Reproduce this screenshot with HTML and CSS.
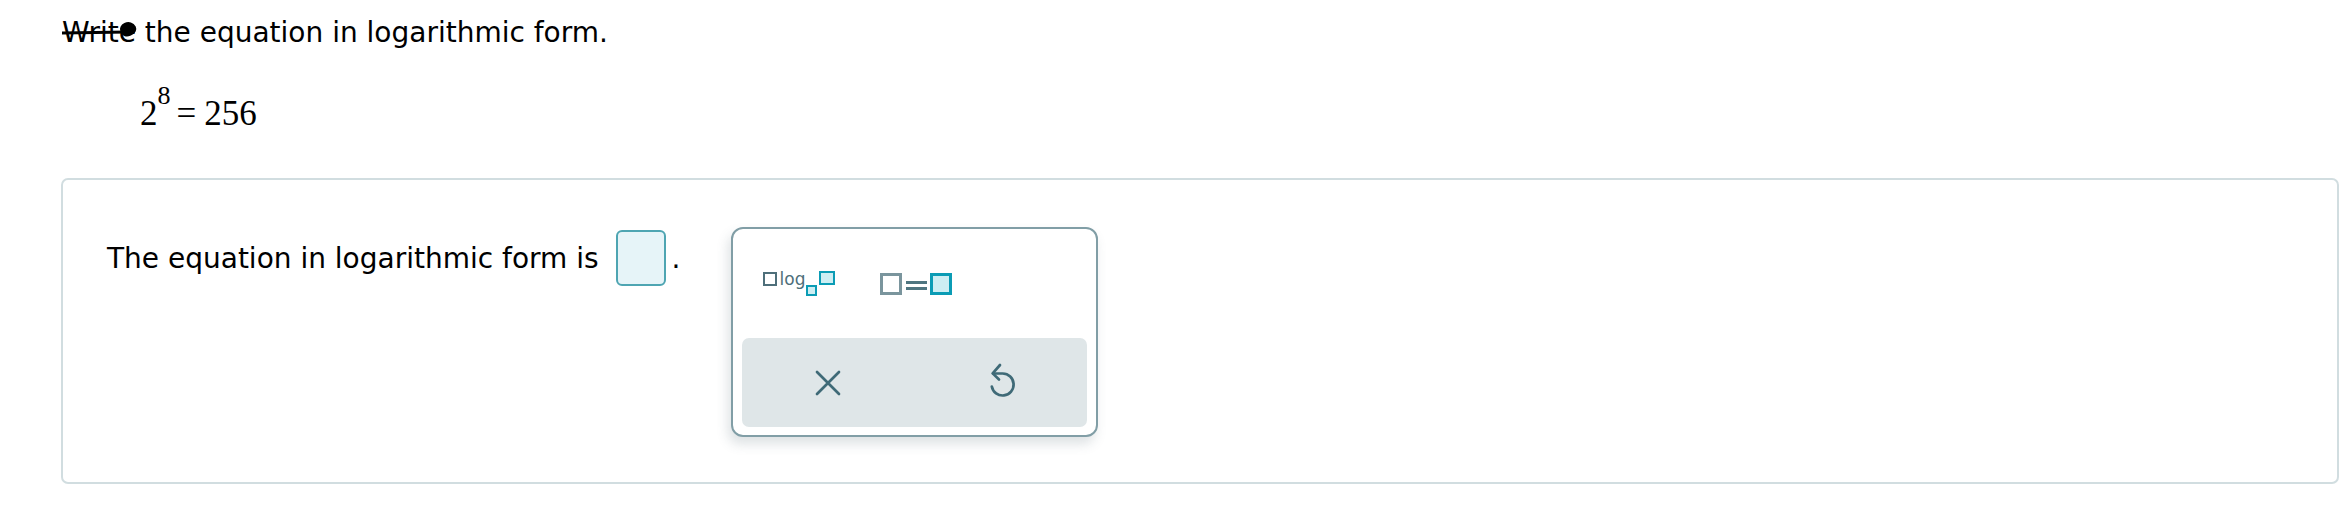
FILE: index.html
```html
<!DOCTYPE html>
<html lang="en">
  <head>
    <meta charset="UTF-8" />
    <title>Logarithmic form</title>
    <link rel="stylesheet" href="styles.css">
  </head>
  <body>
    <div class="page">
      <p class="prompt"><span class="struck">Write</span> the equation in logarithmic form.</p>

      <div class="given">
        <span>2</span><sup class="exp">8</sup><span class="op">=</span><span>256</span>
      </div>

      <div class="panel">
        <div class="answer">
          <span>The equation in logarithmic form is</span>
          <span class="slot"></span>
          <span class="dot">.</span>
        </div>

        <div class="keypad">
          <div class="keys">
            <button class="key" title="logarithm">
              <span class="tpl-log">
                <span class="bx bx-arg"></span>
                <span class="log-word">log</span>
                <span class="bx bx-sub"></span>
                <span class="bx bx-sup"></span>
              </span>
            </button>
            <button class="key" title="equals">
              <span class="tpl-eq">
                <span class="sq sq-left"></span>
                <span class="eq-bars"><i></i><i></i></span>
                <span class="sq sq-right"></span>
              </span>
            </button>
            <span></span>
          </div>

          <div class="actions">
            <button class="act" title="clear">
              <svg width="28" height="28" viewBox="0 0 28 28">
                <path d="M3 3 L25 25 M25 3 L3 25" stroke="#3f6a77" stroke-width="2.7" stroke-linecap="round" fill="none" />
              </svg>
            </button>
            <button class="act" title="undo">
              <svg width="45" height="45" viewBox="0 0 45 45">
                <path d="M15 13.5 H24.7 A11 11 0 1 1 13.8 26.5" stroke="#3f6a77" stroke-width="2.7" stroke-linecap="round" fill="none" />
                <path d="M22 5 L14.7 13.4 L21 19.5" stroke="#3f6a77" stroke-width="2.7" stroke-linecap="round" stroke-linejoin="round" fill="none" />
              </svg>
            </button>
          </div>
        </div>
      </div>
    </div>
  </body>
</html>
```

FILE: styles.css
```css
body {
  margin: 0;
  font-family: "DejaVu Sans", Verdana, sans-serif;
  color: #000;
  background: #fff;
}
.page {
  padding-top: 16px;
}
.prompt {
  margin: 0 0 0 62px;
  font-size: 28px;
  line-height: 34px;
}
.struck {
  position: relative;
}
.struck::before {
  content: "";
  position: absolute;
  left: 0;
  right: 8px;
  top: 15px;
  height: 3px;
  background: #000;
  transform: rotate(-1deg);
}
.struck::after {
  content: "";
  position: absolute;
  right: 0;
  top: 6px;
  width: 16px;
  height: 14px;
  border-radius: 50% 60% 45% 50%;
  background: #000;
  transform: rotate(-25deg);
}
.given {
  margin: 44px 0 0 140px;
  font-family: "Liberation Serif", "Times New Roman", serif;
  font-size: 35px;
  line-height: 40px;
}
.exp {
  font-size: 26px;
  line-height: 0;
  vertical-align: 21px;
}
.op {
  margin: 0 8px 0 6px;
}
.panel {
  display: flex;
  align-items: flex-start;
  margin: 44px 11px 0 61px;
  padding: 47px 44px 45px 44px;
  border: 2px solid #d1dde0;
  border-radius: 7px;
}
.answer {
  display: flex;
  align-items: center;
  height: 56px;
  margin-top: 3px;
  font-size: 28px;
}
.slot {
  width: 50px;
  height: 56px;
  margin-left: 17px;
  box-sizing: border-box;
  border: 2px solid #4ea5b2;
  border-radius: 6px;
  background: #e6f4f8;
}
.dot {
  margin-left: 6px;
}
.keypad {
  width: 367px;
  height: 210px;
  margin-left: 50px;
  padding: 0 9px 8px;
  box-sizing: border-box;
  border: 2px solid #819ea6;
  border-radius: 12px;
  background: #fff;
  box-shadow: -3px 7px 12px rgba(70, 95, 105, 0.18);
  display: flex;
  flex-direction: column;
}
.keys {
  height: 109px;
  display: grid;
  grid-template-columns: 1fr 1fr 1fr;
  align-items: center;
}
button {
  border: none;
  background: none;
  padding: 0;
  cursor: pointer;
  font-family: inherit;
}
.key {
  display: flex;
  justify-content: center;
  align-items: center;
  height: 60px;
}
.tpl-log {
  display: flex;
  align-items: flex-start;
  height: 25px;
  margin-top: -1px;
}
.bx {
  box-sizing: border-box;
  display: block;
  border: 2px solid #0b9cb5;
  background: #cdeef3;
}
.bx-arg {
  width: 14px;
  height: 14px;
  margin-top: 1px;
  border-color: #4e6f7a;
  background: #fff;
}
.log-word {
  font-size: 17px;
  line-height: 17px;
  color: #4e6f7a;
  margin-left: 3px;
}
.bx-sub {
  width: 11px;
  height: 11px;
  margin: 14px 0 0 1px;
}
.bx-sup {
  width: 16px;
  height: 14px;
  margin-left: 2px;
}
.tpl-eq {
  display: flex;
  align-items: center;
  margin-left: 4px;
}
.sq {
  display: block;
  width: 22px;
  height: 22px;
  box-sizing: border-box;
  border: 3px solid #7a959d;
  background: #fff;
}
.sq-right {
  border-color: #0b9cb5;
  background: #cdeef3;
}
.eq-bars {
  display: flex;
  flex-direction: column;
  gap: 3px;
  margin: 3px 3px 0 4px;
}
.eq-bars i {
  display: block;
  width: 21px;
  height: 3px;
  background: #4f7681;
}
.actions {
  flex: 1;
  display: flex;
  background: #dfe6e8;
  border-radius: 7px;
}
.act {
  flex: 1;
  display: flex;
  justify-content: center;
  align-items: center;
}
```
